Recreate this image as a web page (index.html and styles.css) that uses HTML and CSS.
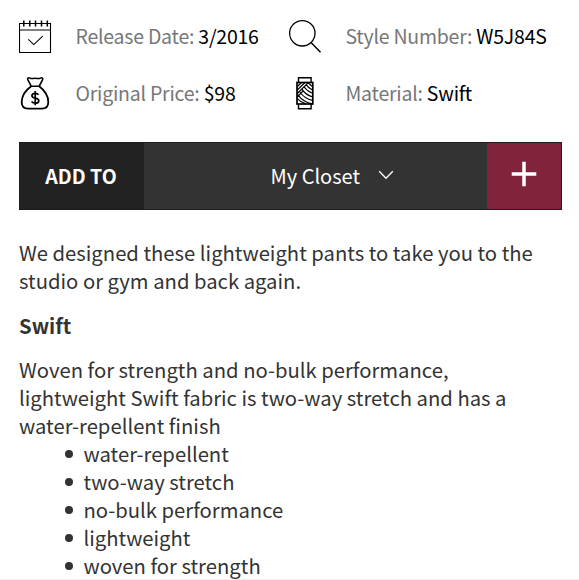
FILE: index.html
```html
<!DOCTYPE html>
<html lang="en">
<head>
  <meta charset="UTF-8">
  <meta name="viewport" content="width=device-width, initial-scale=1.0">
  <title>Swift Pants</title>
  <link rel="stylesheet" href="styles.css">
</head>
<body>

  <div class="details">
    <div class="detail">
      <svg class="icon" viewBox="0 0 34 34">
        <path d="M.5 4.500h31v29h-31z M.5 11h31" stroke-width="1.1"/>
        <path d="M4.800 1.500v6 M10.800 1.500v6 M16.500 1.500v6 M22.500 1.500v6 M28.300 1.500v6" stroke-width="1.5"/>
        <path d="M9.300 20.300l5.500 5.300 8.900-8.400" stroke-width="1.1"/>
      </svg>
      <p><span class="label">Release Date:</span> 3/2016</p>
    </div>
    <div class="detail">
      <svg class="icon" viewBox="0 0 34 34">
        <circle cx="13.300" cy="14.300" r="12.700" stroke-width="1.3"/>
        <path d="M22 23.500l9.500 9.800" stroke-width="1.5"/>
      </svg>
      <p><span class="label">Style Number:</span> W5J84S</p>
    </div>
    <div class="detail">
      <svg class="icon" viewBox="0 0 34 34">
        <path d="M12.200 10.200L8.900 3.900c-.8-1.500.4-2.600 2-1.800 1.800.9 3.200.2 5.300.2s3.500.7 5.300-.2c1.600-.8 2.800.3 2 1.800l-3.300 6.300z" stroke-width="1.6"/>
        <path d="M12.200 10.200C6.200 14.500 2.700 20 2.700 26c0 4.600 2.300 6.700 6.500 6.700h13.600c4.200 0 6.500-2.100 6.500-6.700 0-6-3.500-11.500-9.100-15.800" stroke-width="1.8"/>
        <path d="M19.500 18.800c-.7-1-1.800-1.500-3.300-1.500-2 0-3.300 1-3.300 2.400 0 3.500 6.900 1.500 6.900 5 0 1.500-1.400 2.500-3.500 2.500-1.600 0-2.900-.6-3.800-1.700 M16.200 15.100v14.200" stroke-width="1.700"/>
      </svg>
      <p><span class="label">Original Price:</span> $98</p>
    </div>
    <div class="detail">
      <svg class="icon" viewBox="0 0 34 34">
        <path d="M9.500 6.500V1.700h12.600v4.800 M9.500 28v4.800h12.600V28" stroke-width="1.400"/>
        <rect x="8" y="6.500" width="15.800" height="21.500" stroke-width="1.700"/>
        <path d="M8.300 10.500l4-3.800 M8.300 14l7.400-7.300 M8.300 17.500l10.700-10.600 M8.300 21l6.400-6.600
          M15.200 11c2 3 4.800 5 8.300 6.300 M17.300 8.800c1.600 2.300 3.700 3.800 6.200 5.200 M19.300 6.900c1.300 1.500 2.500 2.500 4.200 3.500
          M13 13.300c2.500 3.800 6 6.200 10.500 7.500 M10.900 16c3 4.400 7.200 7.300 12.600 8.300 M8.600 18.600c3.700 5 9 8.300 14.900 9.200
          M8.300 22.600c2.500 2.800 5.300 4.400 8.600 5.200" stroke-width="1.200"/>
      </svg>
      <p><span class="label">Material:</span> Swift</p>
    </div>
  </div>

  <div class="add-bar">
    <div class="add-label">ADD TO</div>
    <div class="add-select">
      My Closet
      <svg class="arrow" viewBox="0 0 16 10"><path d="M1.200 1.200L8 8.200l6.800-7" stroke-width="1.300"/></svg>
    </div>
    <div class="add-btn">
      <svg class="plus" viewBox="0 0 26 26"><path d="M13 .7v24.600 M.7 13h24.600" stroke-width="3.500"/></svg>
    </div>
  </div>

  <div class="description">
    <p>We designed these lightweight pants to take you to the studio or gym and back again.</p>
    <h2>Swift</h2>
    <p>Woven for strength and no-bulk performance, lightweight Swift fabric is two-way stretch and has a water-repellent finish</p>
    <ul>
      <li>water-repellent</li>
      <li>two-way stretch</li>
      <li>no-bulk performance</li>
      <li>lightweight</li>
      <li>woven for strength</li>
    </ul>
  </div>

</body>
</html>
```
FILE: styles.css
```css
* {
  box-sizing: border-box;
}

body {
  margin: 0;
  height: 580px;
  padding: 19px 17.5px 0 19px;
  overflow: hidden;
  background-color: #fff;
  border-bottom: 1px solid #eee;
  font-family: "Noto Sans CJK SC", "Noto Sans", sans-serif;
  font-size: 20.25px;
  line-height: 28px;
  color: #333;
}

p, h2, ul {
  margin: 0;
}

svg {
  display: block;
  fill: none;
  stroke: currentColor;
}

/* Product details */
.details {
  display: grid;
  grid-template-columns: 270px 1fr;
  row-gap: 23px;
  font-size: 19.5px;
  letter-spacing: -0.23px;
  color: #000;
}

.detail {
  display: flex;
  align-items: center;
  height: 34px;
  white-space: nowrap;
}

.icon {
  width: 34px;
  height: 34px;
  margin-right: 22.5px;
}

.label {
  color: #777;
}

/* Add to closet bar */
.add-bar {
  display: flex;
  height: 68px;
  margin-top: 31.5px;
  border: 1px solid #1d1d1d;
  font-size: 20px;
  color: #fff;
}

.add-label,
.add-select,
.add-btn {
  display: flex;
  align-items: center;
  justify-content: center;
}

.add-label {
  width: 124px;
  padding-right: 2px;
  background-color: #222;
  font-size: 19.5px;
  font-weight: bold;
}

.add-select {
  flex: 1;
  padding-left: 34px;
  background-color: #333;
}

.arrow {
  width: 16px;
  height: 10px;
  margin: 0 0 2px 18px;
}

.add-btn {
  width: 74px;
  background-color: #80233b;
}

.plus {
  width: 26px;
  height: 26px;
  margin-bottom: 3px;
}

/* Description */
.description {
  margin-top: 29.5px;
  padding-right: 16px;
}

.description h2 {
  margin: 17px 0 16px;
  font-size: 20.25px;
  font-weight: bold;
}

.description ul {
  padding-left: 46px;
  list-style: none;
}

.description li {
  display: flex;
  align-items: center;
}

/* bullet */
.description li::before {
  content: "";
  width: 8px;
  height: 8px;
  margin-right: 10.5px;
  border-radius: 50%;
  background-color: #333;
}
```
